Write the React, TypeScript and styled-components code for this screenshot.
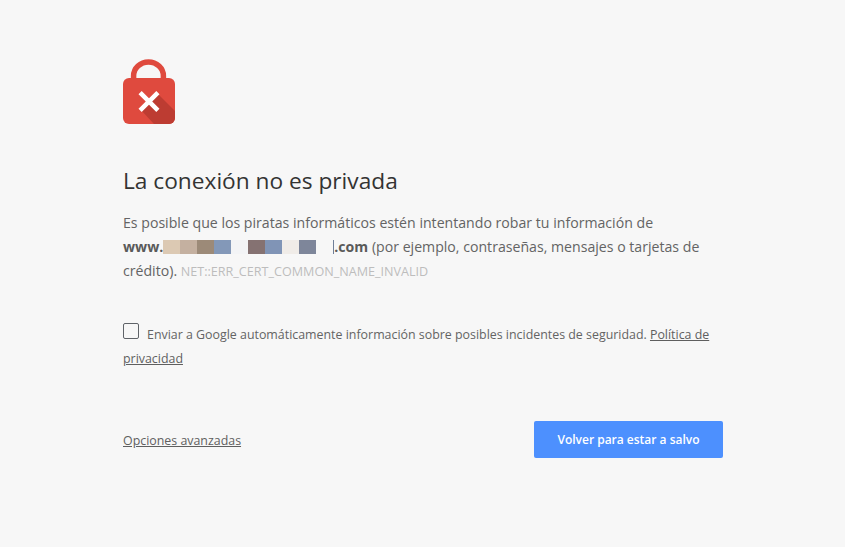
import React from "react";
import styled, { createGlobalStyle } from "styled-components";

const Global = createGlobalStyle`
  html, body { margin: 0; padding: 0; background: #f7f7f7; height: 100%; }
  body { font-family: "Open Sans", "Noto Sans", "Liberation Sans", sans-serif; }
`;

const Page = styled.main`
  box-sizing: border-box;
  width: 845px;
  height: 547px;
  padding: 59px 122px 0 123px;
  background: #f7f7f7;
  overflow: hidden;
`;

const LockIcon = styled.svg`
  display: block;
  width: 53px;
  height: 66px;
`;

const Title = styled.h1`
  margin: 41px 0 0;
  font-size: 22.7px;
  line-height: 30px;
  font-weight: 400;
  color: #333;
`;

const Body = styled.p`
  margin: 15px 0 0;
  font-size: 14.13px;
  line-height: 24px;
  color: #646464;
`;

const Domain = styled.strong`
  font-weight: 700;
  color: #5a5a5a;
  white-space: nowrap;
`;

const Blur = styled.span<{ $c: string }>`
  display: inline-block;
  width: 17px;
  height: 14px;
  vertical-align: -2px;
  background: ${(p) => p.$c};
`;

const Gap = styled.span`
  display: inline-block;
  width: 17px;
`;

const Caret = styled.span`
  display: inline-block;
  width: 1px;
  height: 14px;
  vertical-align: -2px;
  background: #6f7f99;
`;

const Code = styled.span`
  font-size: 12.6px;
  color: #bdbdbd;
`;

const Consent = styled.div`
  margin-top: 39px;
  font-size: 12.4px;
  line-height: 24px;
  color: #646464;
`;

const Check = styled.span`
  display: inline-block;
  box-sizing: border-box;
  width: 16px;
  height: 16px;
  margin-right: 8px;
  border: 1px solid #5f6368;
  border-radius: 2px;
`;

const TextLink = styled.a`
  color: #5f5f5f;
  text-decoration: underline;
`;

const FooterLink = styled(TextLink)`
  padding-top: 2px;
`;

const Footer = styled.div`
  margin-top: 50px;
  display: flex;
  justify-content: space-between;
  align-items: center;
  font-size: 12.4px;
`;

const SafeButton = styled.button`
  width: 189px;
  height: 37px;
  border: 0;
  border-radius: 2px;
  background: #4d90fe;
  color: #fff;
  font: 600 12px "Open Sans", "Noto Sans", sans-serif;
`;

const colors = ["#dcc9b3", "#c4b0a0", "#9c8a78", "#8398b8", "#f3f4f6", "#857272", "#8094b6", "#f0ece8", "#7e869a"];

export default function App() {
  return (
    <Page>
      <Global />
      <LockIcon viewBox="0 0 53 66">
        <path d="M10.6 30V17a14.9 14 0 0 1 29.8 0v13" fill="none" stroke="#df4a3e" strokeWidth="5.5" />
        <rect x="0" y="19" width="52" height="46" rx="6" fill="#df4a3e" />
        <path d="M33 33 L52 52 V59 a6 6 0 0 1 -6 6 H31 L17 50 Z" fill="#bd3c32" />
        <path d="M17.1 33.6 L34.9 51.4 M34.9 33.6 L17.1 51.4" stroke="#fff" strokeWidth="4.5" />
      </LockIcon>
      <Title>La conexión no es privada</Title>
      <Body>
        Es posible que los piratas informáticos estén intentando robar tu información de{" "}
        <Domain>
          www.
          {colors.map((c) => (
            <Blur key={c} $c={c} />
          ))}
          <Gap />
          <Caret />
          .com
        </Domain>{" "}
        (por ejemplo, contraseñas, mensajes o tarjetas de crédito). <Code>NET::ERR_CERT_COMMON_NAME_INVALID</Code>
      </Body>
      <Consent>
        <Check />
        Enviar a Google automáticamente información sobre posibles incidentes de seguridad.{" "}
        <TextLink>Política de privacidad</TextLink>
      </Consent>
      <Footer>
        <FooterLink>Opciones avanzadas</FooterLink>
        <SafeButton>Volver para estar a salvo</SafeButton>
      </Footer>
    </Page>
  );
}
